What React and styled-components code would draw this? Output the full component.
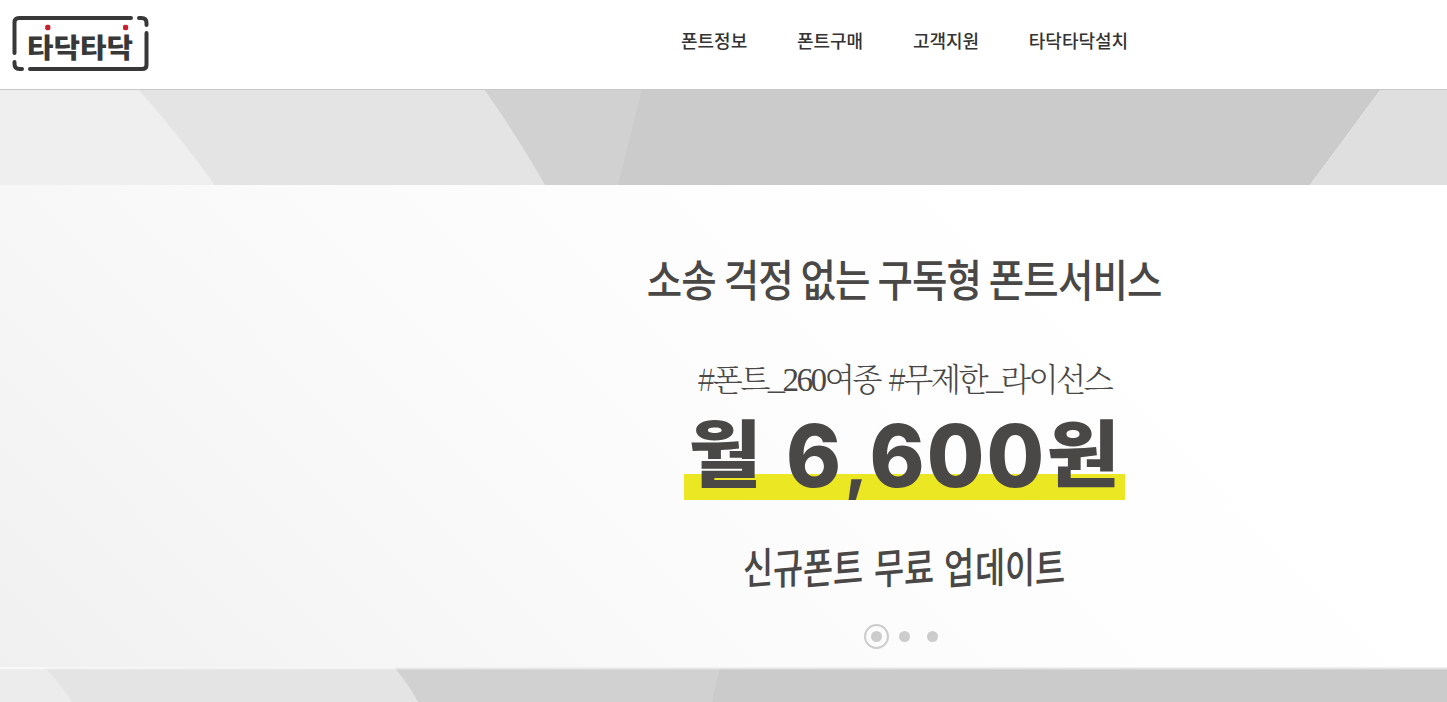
import React from 'react'
import styled, { createGlobalStyle } from 'styled-components'

const GlobalStyle = createGlobalStyle`
  * {
    box-sizing: border-box;
  }

  body {
    margin: 0;
    overflow: hidden;
    background: #fff;
    font-family: 'Noto Sans CJK KR', sans-serif;
  }
`

const menu = ['폰트정보', '폰트구매', '고객지원', '타닥타닥설치']

const Logo = () => (
  <LogoSvg viewBox="0 0 137 56">
    <g fill="none" stroke="#383838" strokeWidth="4" strokeLinecap="round">
      <path d="M2.5 37V6.5Q2.5 2 7 2H119" />
      <path d="M127 2H129.5Q134.5 2 134.5 7V9" />
      <path d="M134.5 17V49Q134.5 53 130 53H18" />
      <path d="M10 53H7.5Q2.5 53 2.5 48V46" />
    </g>
    <text x="15" y="41.5" textLength="106" lengthAdjust="spacingAndGlyphs">
      타닥타닥
    </text>
    <rect x="33.2" y="8.8" width="5.2" height="5.4" rx="1.8" fill="#c8202f" />
    <rect x="111" y="8.8" width="5.2" height="5.4" rx="1.8" fill="#c8202f" />
  </LogoSvg>
)

const App = () => (
  <Page>
    <GlobalStyle />
    <Header>
      <Logo />
      <Nav>
        {menu.map(item => (
          <NavLink key={item}>{item}</NavLink>
        ))}
      </Nav>
    </Header>

    <Facets $height={95} viewBox="0 1 1447 95">
      <path fill="#efefef" d="M0 0H160L225 96H0z" />
      <path fill="#e4e4e4" d="M138 0H500L560 96H215Q178 45 138 0z" />
      <path fill="#d1d1d1" d="M484 0H660V96H545Q518 48 484 0z" />
      <path fill="#cbcbcb" d="M642 0H1381L1310 96H618z" />
      <path fill="#dfdfdf" d="M1381 0H1447V96H1310z" />
    </Facets>

    <Banner>
      <Headline>소송 걱정 없는 구독형 폰트서비스</Headline>
      <Tags>
        #폰트_<Digits>260</Digits>여종 #무제한_라이선스
      </Tags>
      <Price>
        <Won>월</Won>
        <Amount>
          6<Comma>,</Comma>600
        </Amount>
        <Won>원</Won>
      </Price>
      <Update>
        {['신규폰트', '무료', '업데이트'].map(word => (
          <Word key={word}>
            {word.split('').map((letter, i) => (
              <Letter key={i}>{letter}</Letter>
            ))}
          </Word>
        ))}
      </Update>
      <Pager>
        <Dot $active />
        <Dot />
        <Dot />
      </Pager>
    </Banner>

    <Facets $height={35} viewBox="0 0 1447 35">
      <path fill="#ececec" d="M0 0H60L90 35H0z" />
      <path fill="#e4e4e4" d="M44 0H410L430 35H72Q60 16 44 0z" />
      <path fill="#d1d1d1" d="M394 0H730V35H418Q408 16 394 0z" />
      <path fill="#cbcbcb" d="M720 0H1447V35H712z" />
      <rect width="1447" height="1" fill="#fff" opacity="0.7" />
      <rect y="1" width="1447" height="1" fill="#fff" opacity="0.5" />
      <rect y="2" width="1447" height="1" fill="#fff" opacity="0.2" />
    </Facets>
  </Page>
)

const Page = styled.div`
  width: 100%;
  height: 702px;
  overflow: hidden;
`

const Header = styled.header`
  display: flex;
  align-items: flex-start;
  height: 90px;
  padding: 15px 12px 0;
  border-bottom: 1px solid #c8c8c8;
`

const LogoSvg = styled.svg`
  display: block;
  width: 137px;
  height: 56px;
  margin-top: 1px;

  text {
    font-size: 27px;
    font-weight: 900;
    fill: #383838;
  }
`

const Nav = styled.nav`
  display: flex;
  gap: 49.7px;
  margin-left: 532px;
  padding-top: 12px;
`

const NavLink = styled.a`
  color: #333;
  font-size: 18px;
  font-weight: 500;
  line-height: 27px;
  cursor: pointer;
`

const Facets = styled.svg`
  display: block;
  width: 1447px;
  height: ${props => props.$height}px;
`

const Banner = styled.section`
  display: flex;
  flex-direction: column;
  align-items: center;
  height: 482px;
  padding-left: 361px;
  color: #4a4846;
  background: linear-gradient(
    45deg,
    #f0f0f0 0%,
    #f7f7f7 25%,
    #fafafa 38%,
    #fdfdfd 56%,
    #fff 82%
  );
`

const Headline = styled.h2`
  margin: 61px 0 0;
  font-size: 44px;
  font-weight: 500;
  line-height: 64px;
  letter-spacing: -1px;
  white-space: nowrap;
  transform: scaleX(0.875);
`

const Tags = styled.p`
  margin: 43px 0 0;
  font-family: 'Noto Serif CJK KR', 'Noto Sans CJK KR', serif;
  font-size: 32px;
  font-weight: 300;
  line-height: 48px;
  letter-spacing: -2.6px;
  word-spacing: 3px;
  white-space: nowrap;
  transform: scaleX(0.974);
`

const Digits = styled.span`
  font-family: 'Liberation Serif', serif;
  font-size: 34px;
`

const Price = styled.div`
  display: flex;
  align-items: center;
  justify-content: space-between;
  width: 441px;
  height: 96px;
  padding: 0 5px;
  background: linear-gradient(transparent 70px, #ebe722 70px);
  font-weight: 900;
  line-height: 96px;
`

const Won = styled.span`
  font-size: 79px;
  transform: translateY(-2px) scaleY(0.92);
`

const Amount = styled.span`
  margin: 0 -12px 0 8px;
  font-family: Inter, sans-serif;
  font-size: 86px;
  font-weight: 800;
  letter-spacing: 2px;
  transform: translate(2px, 7px) scaleX(0.97);
`

const Comma = styled.span`
  margin-left: 2px;
  font-size: 66px;
`

const Update = styled.div`
  display: flex;
  gap: 10px;
  margin-top: 38px;
`

const Word = styled.span`
  display: flex;
`

const Letter = styled.span`
  width: 30.3px;
  font-size: 42px;
  font-weight: 500;
  line-height: 58px;
  transform: skewY(-5deg) scaleX(0.78);
  transform-origin: left center;
`

const Pager = styled.div`
  display: flex;
  align-items: center;
  gap: 17px;
  margin-top: 35px;
`

const Dot = styled.i`
  width: 11px;
  height: 11px;
  border-radius: 50%;
  background: #ccc;
  outline: ${props => (props.$active ? '2px solid #ccc' : 'none')};
  outline-offset: 5px;
`

export default App
